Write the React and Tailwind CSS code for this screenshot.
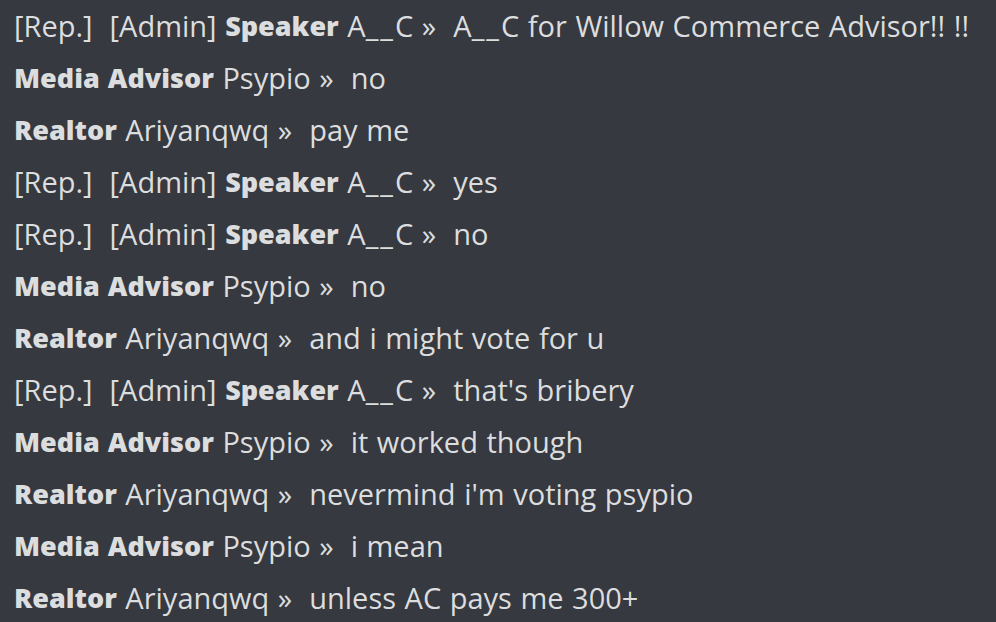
import React from "react";

const lines = [
  { pre: "[Rep.]  [Admin] ", role: "Speaker", name: "A__C", msg: "A__C for Willow Commerce Advisor!! !!" },
  { role: "Media Advisor", name: "Psypio", msg: "no" },
  { role: "Realtor", name: "Ariyanqwq", msg: "pay me" },
  { pre: "[Rep.]  [Admin] ", role: "Speaker", name: "A__C", msg: "yes" },
  { pre: "[Rep.]  [Admin] ", role: "Speaker", name: "A__C", msg: "no" },
  { role: "Media Advisor", name: "Psypio", msg: "no" },
  { role: "Realtor", name: "Ariyanqwq", msg: "and i might vote for u" },
  { pre: "[Rep.]  [Admin] ", role: "Speaker", name: "A__C", msg: "that's bribery" },
  { role: "Media Advisor", name: "Psypio", msg: "it worked though" },
  { role: "Realtor", name: "Ariyanqwq", msg: "nevermind i'm voting psypio" },
  { role: "Media Advisor", name: "Psypio", msg: "i mean" },
  { role: "Realtor", name: "Ariyanqwq", msg: "unless AC pays me 300+" },
];

// underscores in the Discord font are wide and join up
const Text = ({ children }) =>
  children.split(/(__)/).map((part, i) =>
    part === "__" ? (
      <span key={i} className="tracking-[2px]">__</span>
    ) : (
      <span key={i}>{part}</span>
    )
  );

export default function App() {
  return (
    <div className="w-[996px] h-[622px] overflow-hidden bg-[#36393f] text-[#dcddde] pl-[14px] font-['Open_Sans','Noto_Sans',sans-serif] text-[29px] [word-spacing:1px]">
      {lines.map((l, i) => (
        <div key={i} className="h-[52px] flex items-center whitespace-pre">
          {l.pre && <span>{l.pre}</span>}
          <span className="font-extrabold text-[27px]">{l.role}</span>
          <Text>{" " + l.name + " »  " + l.msg}</Text>
        </div>
      ))}
    </div>
  );
}
